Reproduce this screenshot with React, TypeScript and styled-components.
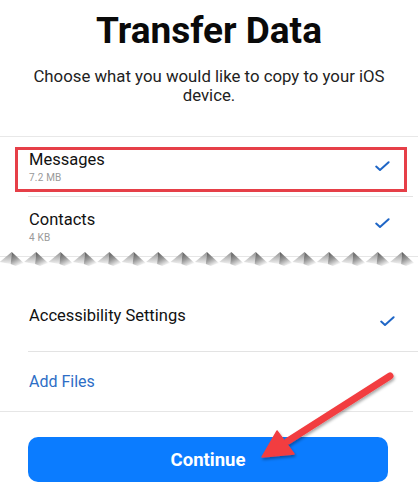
import styled, { createGlobalStyle } from 'styled-components';

const GlobalStyle = createGlobalStyle`
  html, body {
    margin: 0;
    padding: 0;
    background: #ffffff;
  }

  body {
    font-family: Roboto, "Liberation Sans", Arial, sans-serif;
  }
`;

const Page = styled.div`
  position: relative;
  display: flex;
  flex-direction: column;

  width: 418px;
  height: 489px;
  overflow: hidden;

  background: #ffffff;
  padding-top: 9px;
  box-sizing: border-box;
`;

const Title = styled.h1`
  margin: 0;

  font-size: 37px;
  line-height: 44px;
  font-weight: 700;
  color: #0a0a0a;
  text-align: center;
`;

const Subtitle = styled.p`
  margin: 14px 30px 0;

  font-size: 16.8px;
  line-height: 19px;
  color: #222222;
  text-align: center;
`;

const List = styled.div`
  display: flex;
  flex-direction: column;

  margin-top: 31px;
  padding-right: 5px;

  border-top: 1px solid #e8e8e8;
`;

const Row = styled.div<{ $highlight?: boolean; $divider?: boolean; $height: number }>`
  position: relative;
  display: flex;
  flex-direction: row;
  justify-content: space-between;
  align-items: center;

  height: ${(p) => p.$height}px;
  margin-left: 28px;
  padding: 0 23px 0 1px;
  box-sizing: border-box;

  border-bottom: ${(p) => (p.$divider ? '1px solid #e3e3e3' : 'none')};

  &::after {
    content: '';
    display: ${(p) => (p.$highlight ? 'block' : 'none')};
    position: absolute;
    left: -13px;
    right: 6px;
    top: 10px;
    bottom: 4px;
    border: 3px solid #e63f48;
  }
`;

const RowText = styled.div<{ $top?: number }>`
  display: flex;
  flex-direction: column;
  align-self: flex-start;

  padding-top: ${(p) => p.$top ?? 13}px;
`;

const RowTitle = styled.span`
  font-size: 16.5px;
  line-height: 20px;
  color: #111111;
`;

const RowSize = styled.span`
  margin-top: 2px;

  font-size: 10px;
  line-height: 12px;
  color: #999999;
  letter-spacing: 0.2px;
`;

const TornEdge = styled.svg`
  display: block;
  width: 418px;
  height: 17px;
`;

const Spacer = styled.div`
  height: 24px;
`;

const LinkRow = styled.div`
  display: flex;
  align-items: center;

  height: 60px;
  margin-right: 5px;
  padding-left: 29px;
  box-sizing: border-box;

  border-bottom: 1px solid #e6e6e6;
`;

const AddFiles = styled.span`
  font-size: 16px;
  line-height: 20px;
  color: #2d6ec6;
`;

const ContinueButton = styled.button`
  width: 360px;
  height: 45px;
  margin: 25px 0 0 28px;

  border: none;
  border-radius: 10px;
  background: #0b7cff;

  font-family: Roboto, "Liberation Sans", Arial, sans-serif;
  font-size: 18.5px;
  font-weight: 700;
  color: #ffffff;
`;

const ArrowOverlay = styled.svg`
  position: absolute;
  left: 0;
  top: 0;
  width: 418px;
  height: 489px;
  pointer-events: none;
`;

const Check = () => (
  <svg width="15" height="11" viewBox="0 0 15 11">
    <polyline
      points="1.2,5.6 5,9 13.6,1.2"
      fill="none"
      stroke="#1f66c6"
      strokeWidth="2"
      strokeLinecap="round"
      strokeLinejoin="round"
    />
  </svg>
);

const teeth = Array.from({ length: 17 }, (_, i) => 11.7 + i * 24.4);

// torn-paper edge between Contacts and the rest of the list
const Torn = () => (
  <TornEdge viewBox="0 0 418 17">
    <defs>
      <linearGradient id="toothDark" x1="0" y1="0" x2="0.5" y2="1">
        <stop offset="0" stopColor="#555555" />
        <stop offset="0.55" stopColor="#9a9a9a" />
        <stop offset="1" stopColor="#f4f4f4" />
      </linearGradient>
      <linearGradient id="toothLight" x1="0" y1="0" x2="0" y2="1">
        <stop offset="0" stopColor="#8e8e8e" />
        <stop offset="1" stopColor="#f2f2f2" />
      </linearGradient>
      <filter id="soft" x="-10%" y="-30%" width="120%" height="160%">
        <feGaussianBlur stdDeviation="0.7" />
      </filter>
    </defs>
    <line x1="0" y1="6.5" x2="418" y2="6.5" stroke="#e6e6e6" strokeWidth="1" />
    <g filter="url(#soft)">
      {teeth.map((x) => (
        <g key={x}>
          <polygon points={`${x},2 ${x - 12},12 ${x - 1},14`} fill="url(#toothLight)" />
          <polygon points={`${x},2 ${x - 1},14 ${x + 4},16 ${x + 12},13`} fill="url(#toothDark)" />
        </g>
      ))}
    </g>
  </TornEdge>
);

const Arrow = () => (
  <ArrowOverlay viewBox="0 0 418 489">
    <defs>
      <filter id="arrowShadow" x="-20%" y="-20%" width="140%" height="140%">
        <feDropShadow dx="1" dy="2" stdDeviation="1.6" floodColor="#000" floodOpacity="0.35" />
      </filter>
    </defs>
    <g filter="url(#arrowShadow)" fill="#f23d40" stroke="#f23d40">
      <line x1="390" y1="376" x2="288" y2="441" strokeWidth="7" strokeLinecap="round" />
      <polygon points="262,457 277,431 294,454" strokeWidth="1.5" strokeLinejoin="round" />
    </g>
  </ArrowOverlay>
);

export default function App() {
  return (
    <>
      <GlobalStyle />
      <Page>
        <Title>Transfer Data</Title>
        <Subtitle>Choose what you would like to copy to your iOS device.</Subtitle>
        <List>
          <Row $highlight $divider $height={60}>
            <RowText>
              <RowTitle>Messages</RowTitle>
              <RowSize>7.2 MB</RowSize>
            </RowText>
            <Check />
          </Row>
          <Row $height={53}>
            <RowText>
              <RowTitle>Contacts</RowTitle>
              <RowSize>4 KB</RowSize>
            </RowText>
            <Check />
          </Row>
        </List>
        <Torn />
        <Spacer />
        <Row $divider $height={61}>
          <RowText $top={15}>
            <RowTitle>Accessibility Settings</RowTitle>
          </RowText>
          <Check />
        </Row>
        <LinkRow>
          <AddFiles>Add Files</AddFiles>
        </LinkRow>
        <ContinueButton>Continue</ContinueButton>
        <Arrow />
      </Page>
    </>
  );
}
